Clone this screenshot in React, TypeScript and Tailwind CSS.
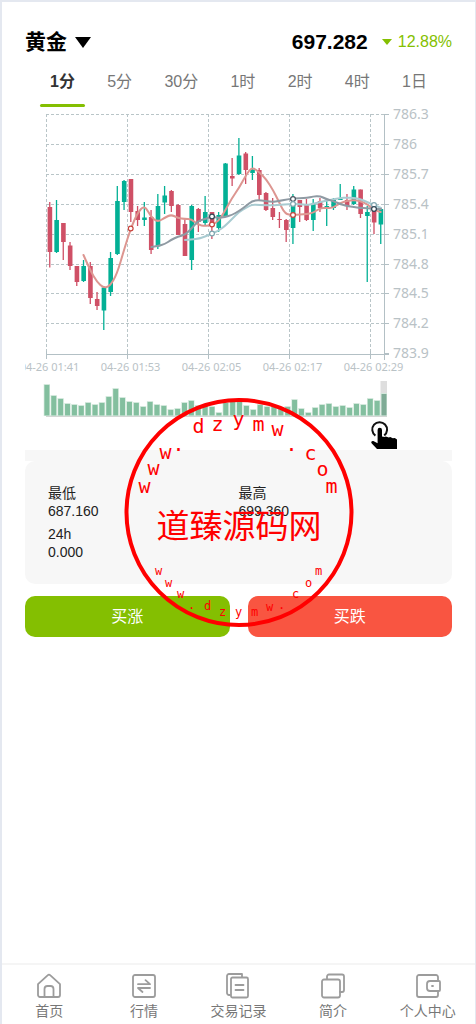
import React, { useState } from 'react';

type Candle = [high: number, open: number, close: number, low: number, up: 0 | 1];

const STEP = 6.755;
const FIRST_X = 49.7;

const candles: Candle[] = [
    [202, 207, 252, 267.5, 0], [200, 220, 252, 253, 1], [223, 223, 242, 260, 0], [242, 245.5, 266, 270, 0],
    [266, 266, 282, 286, 0], [260, 266, 281, 282, 1], [262, 266, 298, 304, 0], [292, 299, 306, 310, 0],
    [287, 287.5, 310.5, 330, 1], [252, 258, 292, 296, 1], [186, 201, 254, 255, 1], [180, 181, 202, 210, 1],
    [179, 179, 212, 222, 0], [206, 211, 220, 226, 0], [202, 217.5, 220, 226, 1], [210, 217, 250, 254, 0],
    [194, 206, 246.5, 249, 1], [186, 195.5, 202.5, 214, 1], [190, 191, 206, 212, 0], [204, 205, 235, 235, 0],
    [220, 224, 256, 256, 0], [205, 206, 260, 270, 1], [208, 209, 222, 232, 0], [196, 212, 223, 225, 1],
    [212, 212, 226, 239, 0], [212, 215, 228, 232, 1], [163, 163.5, 216, 217, 1], [158, 176, 178.5, 186, 0],
    [138, 155.5, 174, 175, 1], [152, 153.5, 170, 184, 0], [156, 169.5, 173, 180, 1], [168, 170, 195, 201, 0],
    [192, 193, 210, 211, 0], [198, 208, 217, 220, 0], [212, 219, 220, 228, 0], [219, 220, 230, 242, 0],
    [194, 204, 228, 244, 1], [200, 200, 207, 222, 0], [199, 205, 220, 221, 0], [199, 203.5, 220, 231, 1],
    [198, 201, 208, 212, 0], [200, 206, 209, 226, 1], [198, 200, 208, 210, 1], [184, 199, 200, 200, 1],
    [194, 200, 206, 210, 0], [186, 189.5, 204, 205, 1], [189.5, 189.5, 214, 218, 0], [206, 212, 216, 282, 1],
    [208, 208, 222.5, 234, 0], [208, 209, 224.5, 244, 1],
];

const volumes = [
    32, 21, 18, 13, 12, 11, 14, 12, 14, 20, 28, 19, 15, 14, 10, 15, 12, 11, 7, 8, 14, 16, 11, 12, 10, 4, 14, 15, 18,
    11, 7, 12, 10, 11, 9, 10, 17, 8, 4, 9, 12, 13, 10, 11, 9, 13, 12, 18, 16, 23,
];

const priceTicks = [
    { y: 114.5, label: '786.3' },
    { y: 144.5, label: '786' },
    { y: 174.5, label: '785.7' },
    { y: 204.5, label: '785.4' },
    { y: 234.5, label: '785.1' },
    { y: 264.5, label: '784.8' },
    { y: 293.5, label: '784.5' },
    { y: 323.5, label: '784.2' },
    { y: 353.5, label: '783.9' },
];

const timeTicks = [
    { x: 46.5, label: '04-26 01:41' },
    { x: 127.5, label: '04-26 01:53' },
    { x: 208.5, label: '04-26 02:05' },
    { x: 289.5, label: '04-26 02:17' },
    { x: 370.5, label: '04-26 02:29' },
];

const averages = [
    {
        color: '#dd9691',
        points: [
            [83.5, 255], [90, 270], [97, 282], [103.7, 288], [110, 286], [117, 274], [124, 250], [130.7, 228.5],
            [137.5, 213], [144.5, 205], [151, 217], [157.5, 222], [164.5, 218], [171, 214.5], [178, 218], [184.7, 219],
            [191.5, 219], [198, 225], [205, 226], [212, 225], [218.5, 221], [225, 211], [232, 198], [239, 188],
            [246, 175], [252, 167], [259, 172], [266, 179], [273, 190], [279, 202], [285, 214], [293, 215],
            [300, 214.5], [306.5, 214], [313, 213], [320, 208], [326.5, 208], [333, 208], [340, 203], [347, 201],
            [353.5, 200], [360, 201], [367, 204], [374, 210], [380.7, 212],
        ],
    },
    {
        color: '#a9cbd1',
        points: [
            [185, 240], [198, 239], [205, 236.5], [212, 233.5], [218, 231], [225, 226], [232, 219], [239, 212],
            [246, 208], [252, 204.5], [259, 205], [272, 205.5], [289, 204], [300, 204], [307, 205], [313, 204],
            [320, 202], [330, 200], [340, 198], [347, 197.5], [354, 198], [360, 199], [367, 202], [374, 205],
            [381, 208],
        ],
    },
    {
        color: '#8f9aa3',
        points: [
            [151.5, 247], [158, 246], [165, 244], [171, 240], [178, 236.5], [185, 235], [192, 228], [198, 221],
            [205, 219], [212, 216.5], [218, 218], [225, 217], [232, 215], [239, 211], [246, 206], [252, 201],
            [259, 200], [272, 202], [279, 201], [289, 199], [300, 198], [307, 198], [313, 196.5], [320, 196],
            [326, 199], [333, 201], [340, 204], [347, 206], [354, 207], [360, 208], [367, 208], [374, 209],
            [381, 209],
        ],
    },
];

const markers = [
    { x: 130.7, y: 228.5, color: '#c9443d' },
    { x: 212, y: 233.5, color: '#7fa6b0' },
    { x: 212, y: 224.5, color: '#c9443d' },
    { x: 212, y: 216.5, color: '#2f4554' },
    { x: 293, y: 199, color: '#4a5560' },
    { x: 293, y: 204, color: '#7fa6b0' },
    { x: 293, y: 215, color: '#c9443d' },
    { x: 374, y: 205, color: '#7fa6b0' },
    { x: 374, y: 209, color: '#2f4554' },
];

// Runs quadratic curves through the midpoints so the line stays smooth
function smooth(points: number[][]) {
    let d = `M${points[0][0]} ${points[0][1]}`;
    for (let i = 1; i < points.length - 1; i++) {
        const [x, y] = points[i];
        const [nx, ny] = points[i + 1];
        d += `Q${x} ${y} ${(x + nx) / 2} ${(y + ny) / 2}`;
    }
    const last = points[points.length - 1];
    return `${d}L${last[0]} ${last[1]}`;
}

function Chart() {
    return (
        <svg viewBox="25 107 427 343" className="block w-full" role="img" aria-label="黄金">
            <g stroke="#b9c5c8" strokeWidth="1" strokeDasharray="3 2">
                {priceTicks.slice(0, -1).map((t) => (
                    <path key={t.label} d={`M46 ${t.y}H384`} />
                ))}
                {timeTicks.map((t) => (
                    <path key={t.label} d={`M${t.x} 114V354`} />
                ))}
            </g>
            <g stroke="#b3c0c5" strokeWidth="1" fill="none">
                <path d="M384.5 114V360M46 354.5H389" />
                {priceTicks.map((t) => (
                    <path key={t.label} d={`M384 ${t.y}h5`} />
                ))}
                {timeTicks.map((t) => (
                    <path key={t.label} d={`M${t.x} 351v8`} />
                ))}
            </g>

            <g fill="#b9c2c6" className="font-['Noto_Sans','Open_Sans',sans-serif]">
                {priceTicks.map((t) => (
                    <text key={t.label} x="393" y={t.y + 4} className="text-[14px]">{t.label}</text>
                ))}
                {timeTicks.map((t) => (
                    <text key={t.label} x={t.x + 3} y="371" textAnchor="middle" className="text-[11px]">{t.label}</text>
                ))}
            </g>

            {candles.map(([high, open, close, low, up], i) => {
                const x = FIRST_X + i * STEP;
                return (
                    <g key={i} fill={up ? '#03b095' : '#cf5066'}>
                        <rect x={x - 0.6} y={high} width="1.3" height={low - high} />
                        <rect x={x - 2.1} y={open} width="4.6" height={close - open} />
                    </g>
                );
            })}

            {averages.map((a) => (
                <path key={a.color} d={smooth(a.points)} fill="none" stroke={a.color} strokeWidth="2" strokeLinecap="round" />
            ))}
            {markers.map((m, i) => (
                <circle key={i} cx={m.x} cy={m.y} r="2.4" fill="#fff" stroke={m.color} strokeWidth="1.2" />
            ))}

            <rect x="380.5" y="381" width="6.5" height="35" fill="#dedede" />
            <path d="M46 416.2H387" stroke="#c4c9c6" strokeWidth="1.2" />
            {volumes.map((v, i) => {
                const x = 43.7 + i * 6.88;
                return (
                    <g key={i}>
                        <rect x={x} y={416 - v} width="6.2" height={v} fill="#d3e8dc" />
                        <rect x={x + 0.7} y={417 - v} width="5" height={v - 1.6} fill={i === volumes.length - 1 ? '#7fab96' : '#83bf9f'} />
                    </g>
                );
            })}

            <g>
                <path d="M375.4 435.6A7.4 7.4 0 1 1 384.2 435.4" fill="none" stroke="#111" strokeWidth="2" />
                <path
                    d="M377.6 430a2.2 2.2 0 0 1 4.4 0v6.6l2.6.4 1.2-.6 3 1 1.4-.4 2.6 1.2 2-.2 2.2 1.6V449H377l-5.2-5.4c-1.4-1.6.2-3.2 2-2.4l3.8 2z"
                    fill="#000"
                />
            </g>
        </svg>
    );
}

const upperRing = [
    ['w', 144, 493], ['w', 153, 475], ['w', 165, 459], ['.', 178, 451], ['d', 198, 433], ['z', 217, 431], ['y', 238, 426],
    ['m', 258, 431], ['w', 277, 436], ['.', 291, 451], ['c', 310, 460], ['o', 322, 476], ['m', 331, 493],
] as const;

const lowerRing = [
    ['w', 158, 575], ['w', 168, 587], ['w', 180, 598], ['.', 191, 609], ['d', 207, 610], ['z', 222, 616], ['y', 238, 616],
    ['m', 254, 616], ['w', 269, 611], ['.', 281, 609], ['c', 295, 598], ['o', 308, 587], ['m', 318, 575],
] as const;

function Stamp() {
    return (
        <div className="pointer-events-none absolute inset-x-0 top-[396px] flex justify-center">
            <svg viewBox="123.5 398 230 230" className="size-[230px]" fill="#f00">
                <circle cx="238.5" cy="512.5" r="112.5" fill="none" stroke="#f00" strokeWidth="4" />
                <g textAnchor="middle" className="font-['DejaVu_Sans_Mono',monospace]">
                    {upperRing.map(([c, x, y], i) => (
                        <text key={i} x={x} y={y} className="text-[20px]">{c}</text>
                    ))}
                    {lowerRing.map(([c, x, y], i) => (
                        <text key={i} x={x} y={y} className="text-[12px]">{c}</text>
                    ))}
                </g>
                <text x="238.5" y="538" textAnchor="middle" className="font-['Noto_Sans_CJK_SC',sans-serif] text-[33px]">
                    道臻源码网
                </text>
            </svg>
        </div>
    );
}

const periods = ['1分', '5分', '30分', '1时', '2时', '4时', '1日'];

const stats = [
    { label: '最低', value: '687.160' },
    { label: '最高', value: '699.360' },
    { label: '24h', value: '0.000' },
];

const navItems = [
    {
        label: '首页',
        icon: (
            <>
                <path d="M2 11.2 11.6 2.3a2 2 0 0 1 2.8 0L24 11.2V22a2 2 0 0 1-2 2H4a2 2 0 0 1-2-2z" />
                <path d="M8.5 24v-8a3 3 0 0 1 3-3h3a3 3 0 0 1 3 3v8" />
            </>
        ),
    },
    {
        label: '行情',
        icon: (
            <>
                <rect x="2" y="2" width="22" height="22" rx="2" />
                <path d="M7 11.2h12l-4.5-4M19 15H7l4.5 4" />
            </>
        ),
    },
    {
        label: '交易记录',
        icon: (
            <>
                <path d="M5 22H4a2 2 0 0 1-2-2V3a2 2 0 0 1 2-2h13v3" />
                <rect x="6" y="4.5" width="17" height="20" rx="1.5" />
                <path d="M10.5 12h8M10.5 17h8" />
            </>
        ),
    },
    {
        label: '简介',
        icon: (
            <>
                <rect x="2" y="6.5" width="18" height="18" rx="2" />
                <path d="M7 6V3.5a2 2 0 0 1 2-2h13a2 2 0 0 1 2 2V17a2 2 0 0 1-2 2h-2" />
            </>
        ),
    },
    {
        label: '个人中心',
        icon: (
            <>
                <path d="M23 8V4a2 2 0 0 0-2-2H4a2 2 0 0 0-2 2v18a2 2 0 0 0 2 2h17a2 2 0 0 0 2-2v-4" />
                <path d="M15 8h9a1 1 0 0 1 1 1v8a1 1 0 0 1-1 1h-9a3 3 0 0 1-3-3v-4a3 3 0 0 1 3-3z" />
                <path d="M17 13h1" />
            </>
        ),
    },
];

export default function App() {
    const [period, setPeriod] = useState('1分');

    return (
        <div className="relative flex min-h-screen flex-col border-t-2 border-r border-l-2 border-[#e4e8f0] bg-white font-['Liberation_Sans','Noto_Sans_CJK_SC',sans-serif]">
            <main className="px-[23px] pt-[25px]">
                <header className="flex h-[30px] items-center justify-between">
                    <button className="flex items-center gap-2 text-[21px] leading-[30px] font-bold text-black">
                        黄金
                        <svg viewBox="0 0 16 11" className="h-[11px] w-4" fill="currentColor">
                            <path d="M0 0h16L8 11z" />
                        </svg>
                    </button>
                    <div className="flex items-center">
                        <span className="text-[21px] leading-[30px] font-bold text-black">697.282</span>
                        <svg viewBox="0 0 10 6" className="mr-1.5 ml-3.5 h-1.5 w-2.5" fill="#84bf01">
                            <path d="M0 0h10L5 6z" />
                        </svg>
                        <span className="text-base text-[#84bf01]">12.88%</span>
                    </div>
                </header>

                <div className="flex justify-between px-[15px]">
                    {periods.map((p) => (
                        <button
                            key={p}
                            onClick={() => setPeriod(p)}
                            className={`relative h-[50px] px-2.5 text-base ${p === period ? 'font-bold text-[#323233]' : 'text-[#777]'}`}
                        >
                            {p}
                            {p === period && <span className="absolute inset-x-0 bottom-0 h-[3px] rounded-full bg-[#84bf01]" />}
                        </button>
                    ))}
                </div>

                <Chart />

                <div className="h-[11px] bg-[#f7f7f7]" />
                <dl className="grid grid-cols-2 gap-y-[5px] rounded-[10px] bg-[#f7f7f7] p-[23px] text-sm leading-[18px] text-[#222]">
                    {stats.map((s) => (
                        <div key={s.label}>
                            <dt>{s.label}</dt>
                            <dd>{s.value}</dd>
                        </div>
                    ))}
                </dl>

                <div className="mt-3 grid grid-cols-2 gap-[18px] text-base text-white">
                    <button className="h-[41px] rounded-[10px] bg-[#84bf01]">买涨</button>
                    <button className="h-[41px] rounded-[10px] bg-[#f95541]">买跌</button>
                </div>
            </main>

            <nav className="sticky bottom-0 mt-auto grid h-[61px] grid-cols-5 border-t-2 border-[#f5f5f5] bg-white">
                {navItems.map((item) => (
                    <a key={item.label} href="#" className="flex flex-col items-center gap-[3px] pt-2 text-sm leading-[18px] text-[#777]">
                        <svg
                            viewBox="0 0 26 26"
                            className="size-[26px]"
                            fill="none"
                            stroke="#9c9c9c"
                            strokeWidth="1.8"
                            strokeLinecap="round"
                            strokeLinejoin="round"
                        >
                            {item.icon}
                        </svg>
                        {item.label}
                    </a>
                ))}
            </nav>

            <Stamp />
        </div>
    );
}
